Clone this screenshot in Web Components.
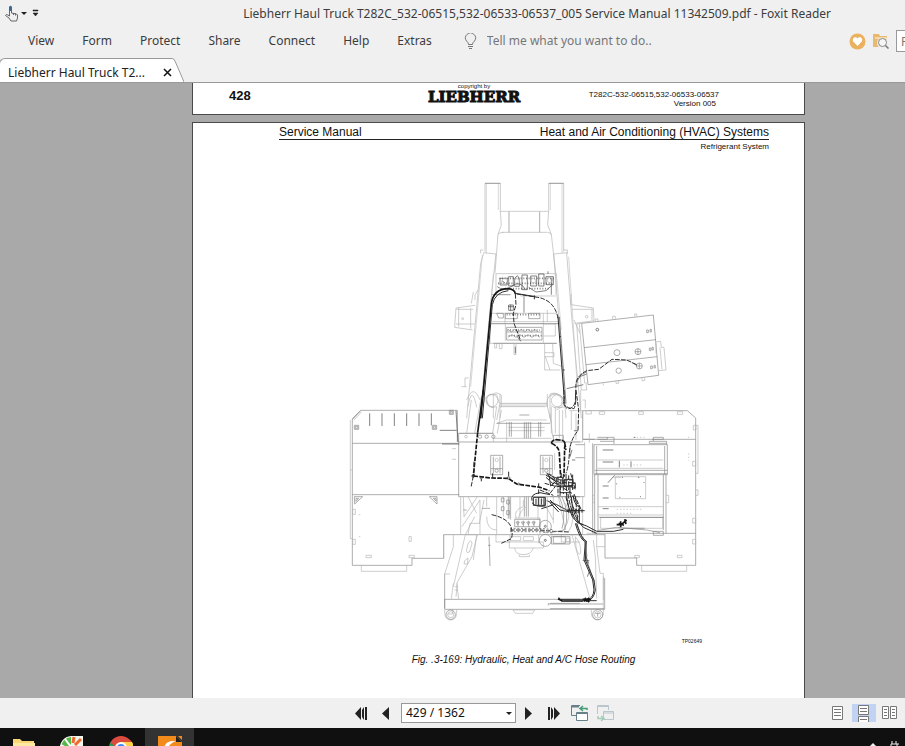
<!DOCTYPE html>
<html lang="en">
<head>
<meta charset="utf-8">
<title>Liebherr Haul Truck T282C - Foxit Reader</title>
<style>
  html, body {
    height: 100%;
    margin: 0;
  }

  body {
    font: 12px/16px "Noto Sans", "Open Sans", sans-serif;
    color: #3c3c3c;
    overflow: hidden;
  }
</style>
</head>
<body>
<reader-app></reader-app>

<script>
class BaseElement extends HTMLElement {
  constructor() {
    super()
    const template = document.createElement('template')
    template.innerHTML = this.constructor.markup
    this.attachShadow({ mode: 'open' })
    this.shadowRoot.appendChild(template.content.cloneNode(true))
  }
}

class TitleBar extends BaseElement {
  static markup = `
    <style>
      :host {
        display: flex;
        align-items: center;
        height: 28px;
        padding: 0 74px 0 5px;
      }

      button {
        display: flex;
        padding: 0;
        border: 0;
        background: none;
      }

      h1 {
        margin: 0 0 0 auto;
        font: inherit;
        white-space: nowrap;
      }
    </style>
    <button aria-label="Hand tool">
      <svg width="24" height="18" viewBox="0 0 24 18" fill="none">
        <path d="M4.500 11V2.500q1-2 2 0V8l5 1 1 1v3l-1 3H6L4 13 .5 10.500q.5-1.500 2-.7L4.500 11zM8.500 8v2M10.500 8.500v2" stroke="#666"/>
        <path d="M4 6V2q1.500-2.500 3 0v4z" fill="#41688f"/>
        <path d="M16 7h6l-3 3z" fill="#222"/>
      </svg>
    </button>
    <button aria-label="Customize toolbar">
      <svg width="14" height="18" viewBox="0 0 14 18">
        <path d="M4 5h5v1H4zM4 8h5L6.500 11z" fill="#222" stroke="#222" stroke-width=".5"/>
      </svg>
    </button>
    <h1><slot></slot></h1>
  `
}

class MenuBar extends BaseElement {
  static markup = `
    <style>
      :host {
        display: flex;
        align-items: center;
        height: 26px;
        padding-left: 28px;
      }

      nav {
        display: flex;
        gap: 28px;
      }

      button {
        display: flex;
        padding: 0;
        border: 0;
        background: none;
        font: inherit;
        color: inherit;
      }

      label {
        display: flex;
        margin-left: 32px;
      }

      input {
        box-sizing: border-box;
        border: 0;
        padding: 0;
        background: none;
        font: inherit;
      }

      input::placeholder {
        color: #777;
        opacity: 1;
      }

      #tell {
        width: 180px;
        margin-left: 10px;
      }

      .tools {
        display: flex;
        align-items: center;
        gap: 7px;
        margin-left: auto;
      }

      #find {
        width: 9px;
        height: 22px;
        padding-left: 4px;
        border: 1px solid #999;
        border-right: 0;
        background: #fff;
      }
    </style>
    <nav>
      <button>View</button>
      <button>Form</button>
      <button>Protect</button>
      <button>Share</button>
      <button>Connect</button>
      <button>Help</button>
      <button>Extras</button>
    </nav>
    <label for="tell" aria-label="Tell me">
      <svg width="13" height="16" viewBox="0 0 13 16" fill="none" stroke="#777">
        <path d="M4.500 11.500Q4.500 9.500 2.500 8A5 5 0 1 1 10.500 8Q8.500 9.500 8.500 11.500zM4 13.500h5M5 15.500h3"/>
      </svg>
    </label>
    <input id="tell" placeholder="Tell me what you want to do..">
    <div class="tools">
      <button aria-label="Favorites">
        <svg width="17" height="17" viewBox="0 0 17 17">
          <circle cx="8.500" cy="8.500" r="8" fill="#eab15f"/>
          <path d="M8.500 13L4.200 8.500C2.500 5.500 6.500 2.500 8.500 5.500c2-3 6 0 4.300 3z" fill="#fff"/>
        </svg>
      </button>
      <button aria-label="Search folder">
        <svg width="16" height="17" viewBox="0 0 16 17">
          <path d="M0 1h6l1 2h7v11H0z" fill="#eab970"/>
          <path d="M2 5h12" stroke="#fff3df"/>
          <circle cx="9.500" cy="10" r="5.500" fill="#eee"/>
          <circle cx="9.500" cy="9.500" r="4" fill="#f5f5f5" stroke="#888"/>
          <path d="M12.500 12.500l3 3" stroke="#777" stroke-width="1.500"/>
        </svg>
      </button>
      <input id="find" aria-label="Find" placeholder="F">
    </div>
  `
}

class DocumentTab extends BaseElement {
  static markup = `
    <style>
      :host {
        display: flex;
        height: 24px;
        color: #222;
      }

      .label {
        display: flex;
        align-items: center;
        gap: 18px;
        padding: 4px 0 0 8px;
        background: #fff;
        border-top: 1px solid #999;
        border-left: 1px solid #999;
        border-radius: 6px 0 0 0;
        margin-left: -1px;
      }

      button {
        display: flex;
        padding: 0;
        border: 0;
        background: none;
      }
    </style>
    <div class="label">
      <slot></slot>
      <button aria-label="Close tab">
        <svg width="9" height="9" viewBox="0 0 9 9" stroke="#111" stroke-width="1.500"><path d="M1 1l7 7M8 1L1 8"/></svg>
      </button>
    </div>
    <svg width="12" height="24" viewBox="0 0 12 24">
      <path d="M0 .5Q2 .5 3 3l9 21H0z" fill="#fff"/>
      <path d="M0 .5Q2 .5 3 3l9 21" fill="none" stroke="#999"/>
    </svg>
  `
}

class PdfPage extends BaseElement {
  static markup = `
    <style>
      :host {
        display: block;
        background: #fff;
        border: 1px solid #4a4a4a;
        color: #111;
        font-family: "Liberation Sans", Arial, sans-serif;
      }
    </style>
    <slot></slot>
  `
}

class PageFooter extends BaseElement {
  static markup = `
    <style>
      :host {
        display: grid;
        grid-template-columns: 1fr auto 1fr;
        height: 31px;
        padding: 0 85px 0 36px;
      }

      .number {
        font: bold 13px/16px "Liberation Sans", Arial, sans-serif;
        padding-top: 5px;
      }

      .brand {
        text-align: center;
        font-size: 6px;
        line-height: 7px;
      }

      .logo {
        display: block;
        font: bold 15px/15px "DejaVu Serif", serif;
        -webkit-text-stroke: 1px #111;
      }

      .version {
        text-align: right;
        font-size: 8px;
        line-height: 9px;
        padding-top: 7px;
      }

      .version span {
        display: block;
        padding-right: 3px;
      }
    </style>
    <div class="number">428</div>
    <div class="brand">copyright by<span class="logo">LIEBHERR</span></div>
    <div class="version">T282C-532-06515,532-06533-06537<span>Version 005</span></div>
  `
}

class PageHeader extends BaseElement {
  static markup = `
    <style>
      :host {
        display: block;
        margin: 0 35px 0 86px;
        font-size: 12px;
        line-height: 14px;
      }

      .titles {
        display: flex;
        justify-content: space-between;
        padding-top: 2px;
        border-bottom: 1px solid #222;
      }

      .sub {
        text-align: right;
        font-size: 8px;
        line-height: 10px;
        padding-top: 2px;
      }
    </style>
    <div class="titles"><slot name="left"></slot><slot name="right"></slot></div>
    <div class="sub"><slot></slot></div>
  `
}

class HoseFigure extends BaseElement {
  static markup = `
    <style>
      :host {
        display: block;
      }

      svg {
        display: block;
        width: 100%;
        fill: none;
        stroke: #b4b4b4;
        stroke-width: 2;
      }

      .mid { stroke: #858585; }
      .dark { stroke: #444; }
      .fine { stroke: #c4c4c4; }
      .hose { stroke: #161616; stroke-width: 5; }
      .thin { stroke: #2c2c2c; stroke-width: 3; }
      .dash { stroke-dasharray: 14 4; }

      .code {
        font-size: 5px;
        line-height: 8px;
        text-align: right;
        padding-right: 102px;
      }

      .caption {
        font-size: 10px;
        line-height: 14px;
        font-style: italic;
        text-align: center;
        padding: 8px 0 0 50px;
      }
    </style>
    <svg viewBox="193 152 611 485" role="img" aria-label="Hose routing, top view">
      <!-- front half: frame rails, axle and condenser box -->
      <g transform="translate(440 170) scale(.33333)">
        <path d="M135 245V40H181V124H326V40H371V245M181 124L184 165L174 193L165 310M326 124L323 165L334 193L347 310M186 187H322M122 250V240H130M371 240H382V252M130 248L168 252M341 252L382 248"/>
        <path class="mid" d="M207 125V187M299 125V187M135 40H181M326 40H371"/>
        <path d="M131 250L122 280L84 700L80 745M168 250L150 420L120 745M341 252L353 400L378 745M380 250L395 440L424 745M174 193Q178 187 190 187M323 187Q332 187 334 195"/>
        <path class="fine" d="M139 42V250M175 42V120M331 42V120M366 42V250M127 255L92 650M386 260L412 650M160 310L146 480M349 310L364 480"/>
        <path d="M168 311H348V374M168 311V372M168 374H214M242 378H348M252 378V428M150 430H350M156 455H355M153 461H355M196 462V512M310 430V518M150 520H350M150 460V520M195 430V460M322 420V455"/>
        <path class="mid" d="M154 461H356M252 380V428M160 520H350M155 374H210"/>
        <!-- valve block -->
        <path class="mid" stroke-dasharray="3 5" stroke-width="5" d="M178 325H342M174 340H340M195 356H330M200 434H300M202 480H300M206 497H306"/>
        <path class="dark" d="M180 325h22v20h-22zM206 320h14v28h-14zM224 325v24h14v-24l-6-8zM246 315h16v44h-16zM272 318h18v30h-18zM296 312v36h16v-36zM318 320h22v24h-22zM266 352l22 14 30-4 20-18M172 350q20 16 44-2t40 10M186 332l10 8M324 312v-8M334 374v-50"/>
        <circle cx="195" cy="335" r="10"/><circle cx="330" cy="330" r="8"/><circle cx="280" cy="332" r="7"/><circle cx="230" cy="335" r="9"/>
        <path class="mid" d="M200 472H306V510H200zM200 486H306M204 478l10 8 10-8 10 8 10-8 10 8 10-8 10 8 10-8 10 8M204 502l12-8 12 8 12-8 12 8 12-8 12 8 12-8 12 8M196 430h36v16h-36zM266 430h34v16h-34zM170 430h20v14h-14z"/>
        <path d="M164 520v14h6v-14M178 520v16h8v-16M222 520v34h6v-34M310 462H346V498H310M314 520V600H360M314 548H342V560H314M316 560L330 600M338 520L340 580L368 590"/>
        <!-- mounts beside the rails -->
        <path d="M105 406L48 414L44 472L98 480M50 418H100M48 462H104M56 414V470M92 416V476M393 404L460 414L462 452L404 460M396 418H458M456 416V450M402 450L420 490M105 390V375L114 360M393 372V404M100 366L94 400M75 650V624H86M64 650H80"/>
        <circle cx="68" cy="446" r="3"/><circle cx="440" cy="440" r="4"/>
        <!-- condenser box -->
        <path class="mid" d="M425 460L640 435L656 616L444 644ZM432 533L648 509M438 584L652 560"/>
        <path d="M425 460L410 462L424 660H440L438 636M418 462L434 640M648 516L662 514L664 532L672 532L678 600L656 602M660 532L666 598M466 455v-8h8v7M518 447v-8h8v7M584 440v-8h6v7M528 632v8h8v-8M606 624v8h8v-8M490 640v6M648 520v30"/>
        <circle cx="472" cy="479" r="4" class="dark"/><circle cx="531" cy="548" r="9" class="mid"/><circle cx="594" cy="545" r="9" class="mid"/><circle cx="536" cy="602" r="8" class="mid"/><circle cx="598" cy="588" r="9" class="mid"/>
        <path class="mid" d="M585 545h18M594 536v18M589 588h18M598 579v18M620 480h5v8h-5zM630 478h4v8h-4zM628 534h5v8h-5zM636 532h4v8h-4zM632 588h5v8h-5zM642 586h4v8h-4z"/>
        <!-- suspension mounts -->
        <path d="M130 700Q136 672 160 672V745M180 672V745M160 672Q170 664 184 676V712M330 672V745M322 672V712M330 672Q354 662 372 690T352 712M184 702H324M184 708H324M84 710Q96 640 110 712M140 690Q140 712 160 712M428 690H436V715"/>
        <circle cx="352" cy="692" r="18"/><circle cx="156" cy="692" r="18"/>
        <!-- hoses -->
        <path class="hose" d="M122 745L154 402Q160 356 205 356Q225 358 226 372"/>
        <path class="thin" d="M127 745L157 404Q165 366 205 362M226 370L286 380"/>
        <path class="thin dash" d="M230 372L286 381Q330 386 346 420Q352 432 354 445"/>
        <path class="thin" d="M354 440L360 520L374 700M283 376V388M368 600h6M357 500h6"/>
        <path class="dark" d="M358 440L364 520L378 700"/>
        <path class="thin dash" d="M226 372L228 405L220 430L222 460L242 512"/>
        <path class="dark" d="M206 405h14v16h-14zM204 410h18M212 404v18M232 500l10 14M226 530v20"/>
        <path class="thin dash" d="M590 584L560 570L516 568L476 598L440 602Q410 618 408 640L406 695Q400 718 382 716Q370 708 372 690"/>
        <path class="dark" d="M576 578l14 8M380 656L430 644M410 640Q416 612 440 606M412 630Q420 616 440 612"/>
      </g>

      <!-- rear left: deck, frame and engine -->
      <g transform="translate(340 390) scale(.33333)">
        <path class="mid" d="M37 86L62 61H352V156M37 86V526H216V505H311V434H720M37 160H356M37 314H358M62 62L38 88M356 130V320H720M356 156H720M314 552V656"/>
        <path d="M31 90V446H37M42 90L64 66M31 240H37M64 526V544H200V526M362 320V434M340 434V470L314 552"/>
        <path class="dark" d="M89 70V108M126 70V108M163 70V108M200 70V108M237 70V108M274 70V106M299 121H350M306 162H358M348 62L354 156"/>
        <path class="mid" d="M43 106h13v12H43zM46 109h7v6h-7zM277 106h13v12h-13zM280 109h7v6h-7zM328 61h12v12h-12zM331 64h6v6h-6zM43 320H68L44 342zM48 325h8l-8 9zM268 320H291V342zM280 325h8v8z"/>
        <path d="M38 358h8v15h-8zM38 448h8v15h-8zM78 496h16v7H78zM207 496h16v7h-16zM207 440h7v14h-7zM56 440h5M56 374h5M336 176h12M336 208h12"/>
        <!-- axle and torque tube -->
        <path d="M380 130L394 30M404 130L424 20M470 90L480 40H620L634 100M470 100L500 90H620M480 50H616M440 30Q440 8 470 14L478 40M440 30Q446 60 470 50M620 40Q622 10 650 14Q672 20 664 46Q648 62 634 46M634 50V130M646 50V130M658 60V145M470 50L458 130M484 60L472 130M356 130H460V156M460 145H634M500 96V156M506 112H614M506 122H614M380 30Q400 -20 420 30"/>
        <path class="mid" d="M538 75h30M356 130H460M553 96V145M559 96V145M565 96V145M572 96V145M508 96V140M514 96V140M596 96V140M602 96V140M470 100H630M640 136h30v14h-30z"/>
        <circle cx="420" cy="140" r="5" class="mid"/><circle cx="440" cy="140" r="5" class="mid"/><circle cx="460" cy="140" r="5" class="mid"/><circle cx="378" cy="140" r="4"/>
        <path class="mid" d="M452 196H488V254H452zM460 200V250M480 200V250M452 236H488M601 196H637V254H601zM609 200V250M629 200V250M601 236H637"/>
        <circle cx="470" cy="210" r="5"/><circle cx="470" cy="242" r="5" class="mid"/><circle cx="619" cy="210" r="5"/><circle cx="619" cy="242" r="5" class="mid"/>
        <!-- transmission and pumps -->
        <path d="M370 320L372 380L412 320M384 320L410 370M366 410L420 330M376 434L404 380M420 434V330M432 330L418 400M470 320V434M490 320V380M512 320V390M468 434V456H510V434M540 320V380M594 320V390M524 384H600V434M440 320V350M602 320L640 390M384 434L390 400H420M640 320V400M655 320L676 420M664 434V456H720M676 340Q700 380 670 420M690 340Q710 390 684 428"/>
        <path class="mid" d="M553 320V380M559 320V380M565 320V380M505 320V386M510 320V386M484 324h8v12h-8zM500 330h8v12h-8zM484 350h8v12h-8zM500 362h8v12h-8zM426 355h24M370 360h10M524 388H600V410H524zM534 392v18M550 392v18M566 392v18M582 392v18M528 396h10l-5 8zM544 396h10l-5 8zM560 396h10l-5 8zM576 396h10l-5 8z"/>
        <path d="M528 384Q520 360 550 350V330M536 384Q540 360 560 350M500 456H610V474H508V456M524 474Q526 494 550 494T580 474M512 440h30v12h-30zM550 440h30v12h-30zM538 494v6h30v-6M596 434V460M440 380Q440 420 470 420"/>
        <circle cx="616" cy="409" r="18" class="mid"/><circle cx="616" cy="409" r="3" class="dark"/><circle cx="616" cy="451" r="18" class="mid"/><circle cx="616" cy="451" r="3" class="dark"/><circle cx="684" cy="450" r="6"/>
        <path class="mid" d="M447 440L450 528M444 466h8M640 440h36v20h-36z"/>
        <!-- rear frame and bumper -->
        <path d="M311 434V505M340 590L376 434H412L396 500L350 580L356 626M334 626L340 580M330 552H314M384 462q10-20 12 0l-8 24q-10 6-8-8zM374 512l10-8-2 18h-10zM344 590h10M344 600h10M348 620L352 580M410 434L400 510"/>
        <path class="mid" d="M314 656V628H720M314 658H720"/>
        <path d="M314 658V670Q316 690 332 690T350 670V658M519 660H584L578 670H526zM338 660v12h-14"/>
        <circle cx="332" cy="674" r="14" class="mid"/><circle cx="332" cy="674" r="9"/>
        <!-- hoses -->
        <path class="hose" d="M430 0L413 128"/>
        <path class="hose dash" d="M413 128L400 258"/>
        <path class="hose dash" d="M400 258L455 264L505 265L530 282L600 292L628 302"/>
        <path class="thin dash" d="M400 258L393 292M402 215V258M424 266v8M458 250v16M506 245v20M596 280v34M455 374Q500 384 512 408Q520 430 514 446L484 460"/>
        <circle cx="400" cy="258" r="4" class="thin"/><circle cx="424" cy="264" r="3" class="dark"/><circle cx="506" cy="264" r="4" class="dark"/><circle cx="536" cy="282" r="3" class="dark"/>
        <path class="thin dash" d="M510 420H600L640 424L690 426"/>
        <path class="dark" stroke-dasharray="6 5" d="M510 415H600L640 419M510 425H600L640 429"/>
        <path class="thin" d="M576 332Q570 312 600 308L630 314M580 322h36v24h-36zM588 326v18M596 322v24M604 326v18M612 322v24M576 338q10 14 40 10M620 332L650 344L680 360L720 362M604 356Q620 352 640 344"/>
        <path class="thin" d="M656 628L670 632H770M656 622l8 10"/>
        <path class="mid" d="M625 640v6M625 642H790"/>
      </g>

      <!-- rear right: hose bundle, radiator deck and cab -->
      <g transform="translate(550 390) scale(.33333)">
        <path class="mid" d="M98 62H412L437 84V526H260V504H165V434M98 62V148H134M98 148H437M348 430H437"/>
        <path d="M437 106H444V250H438M430 106h8v14h-8zM428 214h9v14h-9zM438 300h6v16h-6M428 385h9v14h-9zM428 448h9v14h-9zM148 65h16v8h-16zM266 65h14v8h-14zM382 65h16v8h-16zM108 62h16v10h-16zM254 496h14v7h-14zM382 496h14v7h-14zM275 526V544H410V526M58 62H98V156H60M78 70V150M64 62V120"/>
        <path class="mid" d="M132 164H352V254H132zM140 168V254M344 168V254M134 254V430H348V254M144 254V420M340 254V420M142 142H192V162M142 148H172V142M150 154H192M298 162V154H350V164M306 148H340V142H310V154M128 160V430M310 424h30v12h-30zM300 160h50"/>
        <path class="dark" d="M158 180H190M158 216H190M158 288H176M158 324H176M158 356H176M174 278L194 256M208 212V232M243 214V232M148 382H340M218 415H284"/>
        <path class="mid" d="M134 241H352M134 251H352"/>
        <path d="M142 210H340M142 235H340M144 350H340M144 375H340M152 384V415H338V384M190 262H214M134 316h-6v22h6M348 316h8v22h-8M150 430H110M140 434V470H165M98 320V434M118 130v28M104 156V318"/>
        <path stroke-dasharray="4 6" d="M220 225H280M200 358H280M200 370H250M250 142H290M416 140v4M416 190v22"/>
        <path d="M196 260H287V326H196z"/>
        <path class="dark" d="M216 262h3M264 262h4M208 322h3M270 320h3M200 280v3M282 276v3M252 142h4"/>
        <path class="mid" d="M0 434H166M76 164H104M76 203H104M60 166V200M0 320H104"/>
        <path d="M66 434L120 626M76 440Q94 460 92 490Q84 500 78 470zM140 470L150 550H160V630M160 560V658M130 450L136 500L140 625M100 440L112 500"/>
        <path class="mid" d="M90 658H164V564M0 656H162M0 640H90"/>
        <path d="M124 658V672Q128 690 142 690T160 672V658M0 20Q10 0 36 20T20 60M0 70L8 140M38 60V150M92 0V60M14 190V240M-8 320V430"/>
        <circle cx="143" cy="674" r="15" class="mid"/><circle cx="143" cy="674" r="10"/>
        <path class="mid" d="M143 668v12M136 670h14M4 440h56v22H4z"/>
        <!-- upper hose runs -->
        <path class="thin dash" d="M78 0L86 60L84 122Q60 150 58 190T48 250M42 0V44Q54 56 72 56Q80 40 76 10"/>
        <path class="hose dash" d="M4 160Q6 146 28 150Q50 150 44 172L42 260M4 160Q28 170 28 190L32 262M44 158L48 180"/>
        <path class="dark" d="M66 210h10M72 122h12M60 200l6-20"/>
        <!-- manifold -->
        <path class="thin dash" d="M-10 250L30 270H74M-16 280L20 290L72 286M0 310L20 284M24 260V318M40 252V312M56 256V300M68 254V300M10 276L66 310M-30 300L10 316M-12 256L30 278H76M-12 262L10 282M62 250L76 300M34 250L30 318M48 252L50 320"/>
        <path class="thin" d="M20 262h18v20H20zM44 268h24v22H44zM30 288h30v20H30zM-2 262l20 12-16 14zM66 280h10v14H66zM-8 254l24 20M-4 250l20 18"/>
        <path class="thin dash" d="M60 308Q64 350 84 380M54 312Q60 350 74 386M66 316L90 352M48 320Q56 370 90 400M72 312L94 360M76 320L84 400"/>
        <path class="thin" d="M70 316Q70 340 88 352V400L110 408L140 424H190L220 418M64 320Q66 380 100 412L140 430M50 320Q60 400 100 404M48 362H104M56 358v10M66 356v14M76 356v14M86 356v14M96 358v10M0 330L30 360L60 366M0 338L26 366"/>
        <path class="mid" d="M36 320Q60 370 44 420L0 428M28 320Q50 370 36 416M140 422L200 412L290 420L330 428"/>
        <path class="hose" d="M200 404L214 404L230 390M206 400l16 6M212 394v18M224 388l4 14"/>
        <path class="thin" d="M76 400Q90 450 106 455L102 510L128 570L132 600Q130 626 108 632M80 400Q94 448 109 453L106 510L132 570L136 600Q132 630 108 635"/>
        <path class="dark" d="M106 455L110 510L134 580M98 512h20M104 490l12 30M120 540l-8 20M80 402L100 450"/>
        <path class="hose" d="M98 628h24M104 624l14 12M102 634l16-10M24 626l12 6"/>
        <path class="thin" d="M30 628H100M34 634H100"/>
      </g>
    </svg>
    <div class="code">TP02649</div>
    <div class="caption"><slot></slot></div>
  `
}

class PageNavigator extends BaseElement {
  static markup = `
    <style>
      :host {
        display: flex;
        align-items: center;
        height: 30px;
        padding: 0 3px 0 354px;
        background: #f0f0f0;
      }

      button {
        display: flex;
        padding: 0;
        border: 0;
        background: none;
      }

      .pages {
        display: flex;
        align-items: center;
        gap: 9px;
      }

      .combo {
        display: grid;
        align-items: center;
      }

      .combo > * {
        grid-area: 1 / 1;
      }

      .combo svg {
        justify-self: end;
        margin-right: 4px;
        pointer-events: none;
      }

      select {
        appearance: none;
        width: 115px;
        height: 20px;
        padding: 0 4px;
        border: 1px solid #999;
        border-radius: 0;
        background: #fff;
        color: #111;
        font: inherit;
        line-height: 18px;
      }

      .views {
        display: flex;
        margin-left: auto;
        gap: 2px;
      }

      .views button {
        width: 24px;
        height: 18px;
        justify-content: center;
      }

      .views .active {
        background: #c1d3f3;
      }
    </style>
    <div class="pages">
      <button aria-label="First page">
        <svg width="14" height="13" viewBox="0 0 14 13" fill="#222"><path d="M7 0v13L1 6.500zM8 3l2-3v13L8 10zM11 0h2v13h-2z"/></svg>
      </button>
      <button aria-label="Previous page">
        <svg width="15" height="13" viewBox="0 0 15 13" fill="#222"><path d="M12 0v13L5 6.500z"/></svg>
      </button>
      <div class="combo">
        <select aria-label="Page"><option>429 / 1362</option></select>
        <svg width="6" height="3" viewBox="0 0 6 3"><path d="M0 0h6L3 3z" fill="#222"/></svg>
      </div>
      <button aria-label="Next page">
        <svg width="14" height="13" viewBox="0 0 14 13" fill="#222"><path d="M0 0v13l7-6.500z"/></svg>
      </button>
      <button aria-label="Last page">
        <svg width="14" height="13" viewBox="0 0 14 13" fill="#222"><path d="M0 0h2v13H0zM3 0l2 3v7l-2 3zM6 0v13l6-6.500z"/></svg>
      </button>
      <button aria-label="Previous view">
        <svg width="17" height="17" viewBox="0 0 17 17" fill="none" stroke="#667f89">
          <path d="M6 10.500H.5v-10H9"/><path d="M1 1.500h7" stroke-width="2"/>
          <path d="M5.500 7.500h11v8h-11z" fill="#fff"/><path d="M6 8h10" stroke-width="2"/>
          <path d="M16 5V3.500H9M12 1L9 3.500 12 6" stroke="#449b75" stroke-width="1.500"/>
        </svg>
      </button>
      <button aria-label="Next view" disabled>
        <svg width="17" height="17" viewBox="0 0 17 17" fill="none" stroke="#b9c6cb">
          <path d="M.5 9V.5h11V5M1 1.500h10"/><path d="M6.500 6.500h10v8h-10zM7 8h9"/>
          <path d="M1 11v2.500h6M4 11l3 2.500L4 16" stroke="#a5cbb9" stroke-width="1.500"/>
        </svg>
      </button>
    </div>
    <div class="views">
      <button aria-label="Single page">
        <svg width="12" height="18" viewBox="0 0 12 18" fill="#fff" stroke="#777"><path d="M.5 2.500h10v13H.5zM2 5.500h7M2 8.500h7M2 11.500h7"/></svg>
      </button>
      <button class="active" aria-label="Continuous">
        <svg width="12" height="18" viewBox="0 0 12 18" fill="#fff" stroke="#777"><path d="M.5 1.500h10v9H.5zM2 4.500h7M2 7.500h7M.5 18V12.500h10V18M2 15.500h7"/></svg>
      </button>
      <button aria-label="Facing pages">
        <svg width="16" height="18" viewBox="0 0 16 18" fill="#fff" stroke="#777"><path d="M.5 2.500h6v12h-6zM8.500 2.500h6v12h-6zM2 5.500h3M2 8.500h3M2 11.500h3M10 5.500h3M10 8.500h3M10 11.500h3"/></svg>
      </button>
    </div>
  `
}

class TaskBar extends BaseElement {
  static markup = `
    <style>
      :host {
        display: flex;
        height: 18px;
        background: #101010;
        overflow: hidden;
      }

      button {
        display: flex;
        justify-content: center;
        width: 49px;
        padding: 8px 0 0;
        border: 0;
        background: none;
      }

      button:first-of-type {
        width: 47px;
      }

      button.active {
        background: #333;
      }

      .tray {
        margin-left: auto;
      }
    </style>
    <button aria-label="File Explorer">
      <svg width="22" height="22" viewBox="0 0 22 22"><path d="M0 3h7l2 2h12v15H0z" fill="#f7d774"/><path d="M0 7h22v13H0z" fill="#ffe9a2"/></svg>
    </button>
    <button aria-label="Coc Coc">
      <svg width="26" height="24" viewBox="0 0 26 24">
        <path d="M1 14A12 12 0 0 1 12 0h12v12A12 12 0 0 1 1 14z" fill="#f2f7ee"/>
        <path d="M2 12A11 11 0 0 1 12 1v7l-5 6z" fill="#55b848"/>
        <path d="M6 3l6 8M2 9l7 4" stroke="#fff" stroke-width="2"/>
        <path d="M15 1l-1 6M22 3l-6 6" stroke="#ef6a32" stroke-width="3"/>
      </svg>
    </button>
    <button aria-label="Chrome">
      <svg width="24" height="24" viewBox="0 0 24 24">
        <circle cx="12" cy="12" r="12" fill="#dd4b3e"/>
        <path d="M2 6l6 9 2 9A12 12 0 0 1 2 6z" fill="#1d9f59"/>
        <path d="M12 6h11A12 12 0 0 1 12 24z" fill="#ffcf45"/>
        <path d="M12 6h11L21 4H8z" fill="#dd4b3e"/>
        <circle cx="12" cy="12" r="6" fill="#fff"/><circle cx="12" cy="12" r="4" fill="#4285f4"/>
      </svg>
    </button>
    <button class="active" aria-label="Foxit Reader">
      <svg width="24" height="24" viewBox="0 0 24 24">
        <path d="M0 0h18l6 6v18H0z" fill="#f28a1c"/>
        <path d="M18 0v6h6z" fill="#222"/><path d="M20 0l4 4V0z" fill="#f28a1c"/>
        <path d="M6 14Q6 4 18 5Q10 8 10 14z" fill="#fff"/>
      </svg>
    </button>
    <button class="tray" aria-label="Notifications">
      <svg width="36" height="12" viewBox="0 0 36 12"><path d="M6 11l4-4 4 4z" fill="#eee"/><path d="M29 5v3M33 5v3M28 8h6v3h-6zM34 8h2" fill="none" stroke="#eee"/></svg>
    </button>
  `
}

class ReaderApp extends BaseElement {
  static markup = `
    <style>
      :host {
        display: flex;
        flex-direction: column;
        height: 100vh;
        background: #f0f0f0;
      }

      main {
        flex: 1;
        min-height: 0;
        box-sizing: border-box;
        padding: 0 100px 0 192px;
        border-top: 1px solid #999;
        background: #a9a9a9;
        overflow: hidden;
      }

      document-tab {
        align-self: flex-start;
        margin-top: 4px;
      }

      .previous {
        border-top: 0;
        margin-bottom: 7px;
      }

      .current {
        height: 790px;
      }
    </style>
    <title-bar>Liebherr Haul Truck T282C_532-06515,532-06533-06537_005 Service Manual 11342509.pdf - Foxit Reader</title-bar>
    <menu-bar></menu-bar>
    <document-tab>Liebherr Haul Truck T2...</document-tab>
    <main>
      <pdf-page class="previous"><page-footer></page-footer></pdf-page>
      <pdf-page class="current">
        <page-header>
          <span slot="left">Service Manual</span>
          <span slot="right">Heat and Air Conditioning (HVAC) Systems</span>
          Refrigerant System
        </page-header>
        <hose-figure>Fig. .3-169: Hydraulic, Heat and A/C Hose Routing</hose-figure>
      </pdf-page>
    </main>
    <page-navigator></page-navigator>
    <task-bar></task-bar>
  `
}

customElements.define('title-bar', TitleBar)
customElements.define('menu-bar', MenuBar)
customElements.define('document-tab', DocumentTab)
customElements.define('pdf-page', PdfPage)
customElements.define('page-footer', PageFooter)
customElements.define('page-header', PageHeader)
customElements.define('hose-figure', HoseFigure)
customElements.define('page-navigator', PageNavigator)
customElements.define('task-bar', TaskBar)
customElements.define('reader-app', ReaderApp)
</script>
</body>
</html>
